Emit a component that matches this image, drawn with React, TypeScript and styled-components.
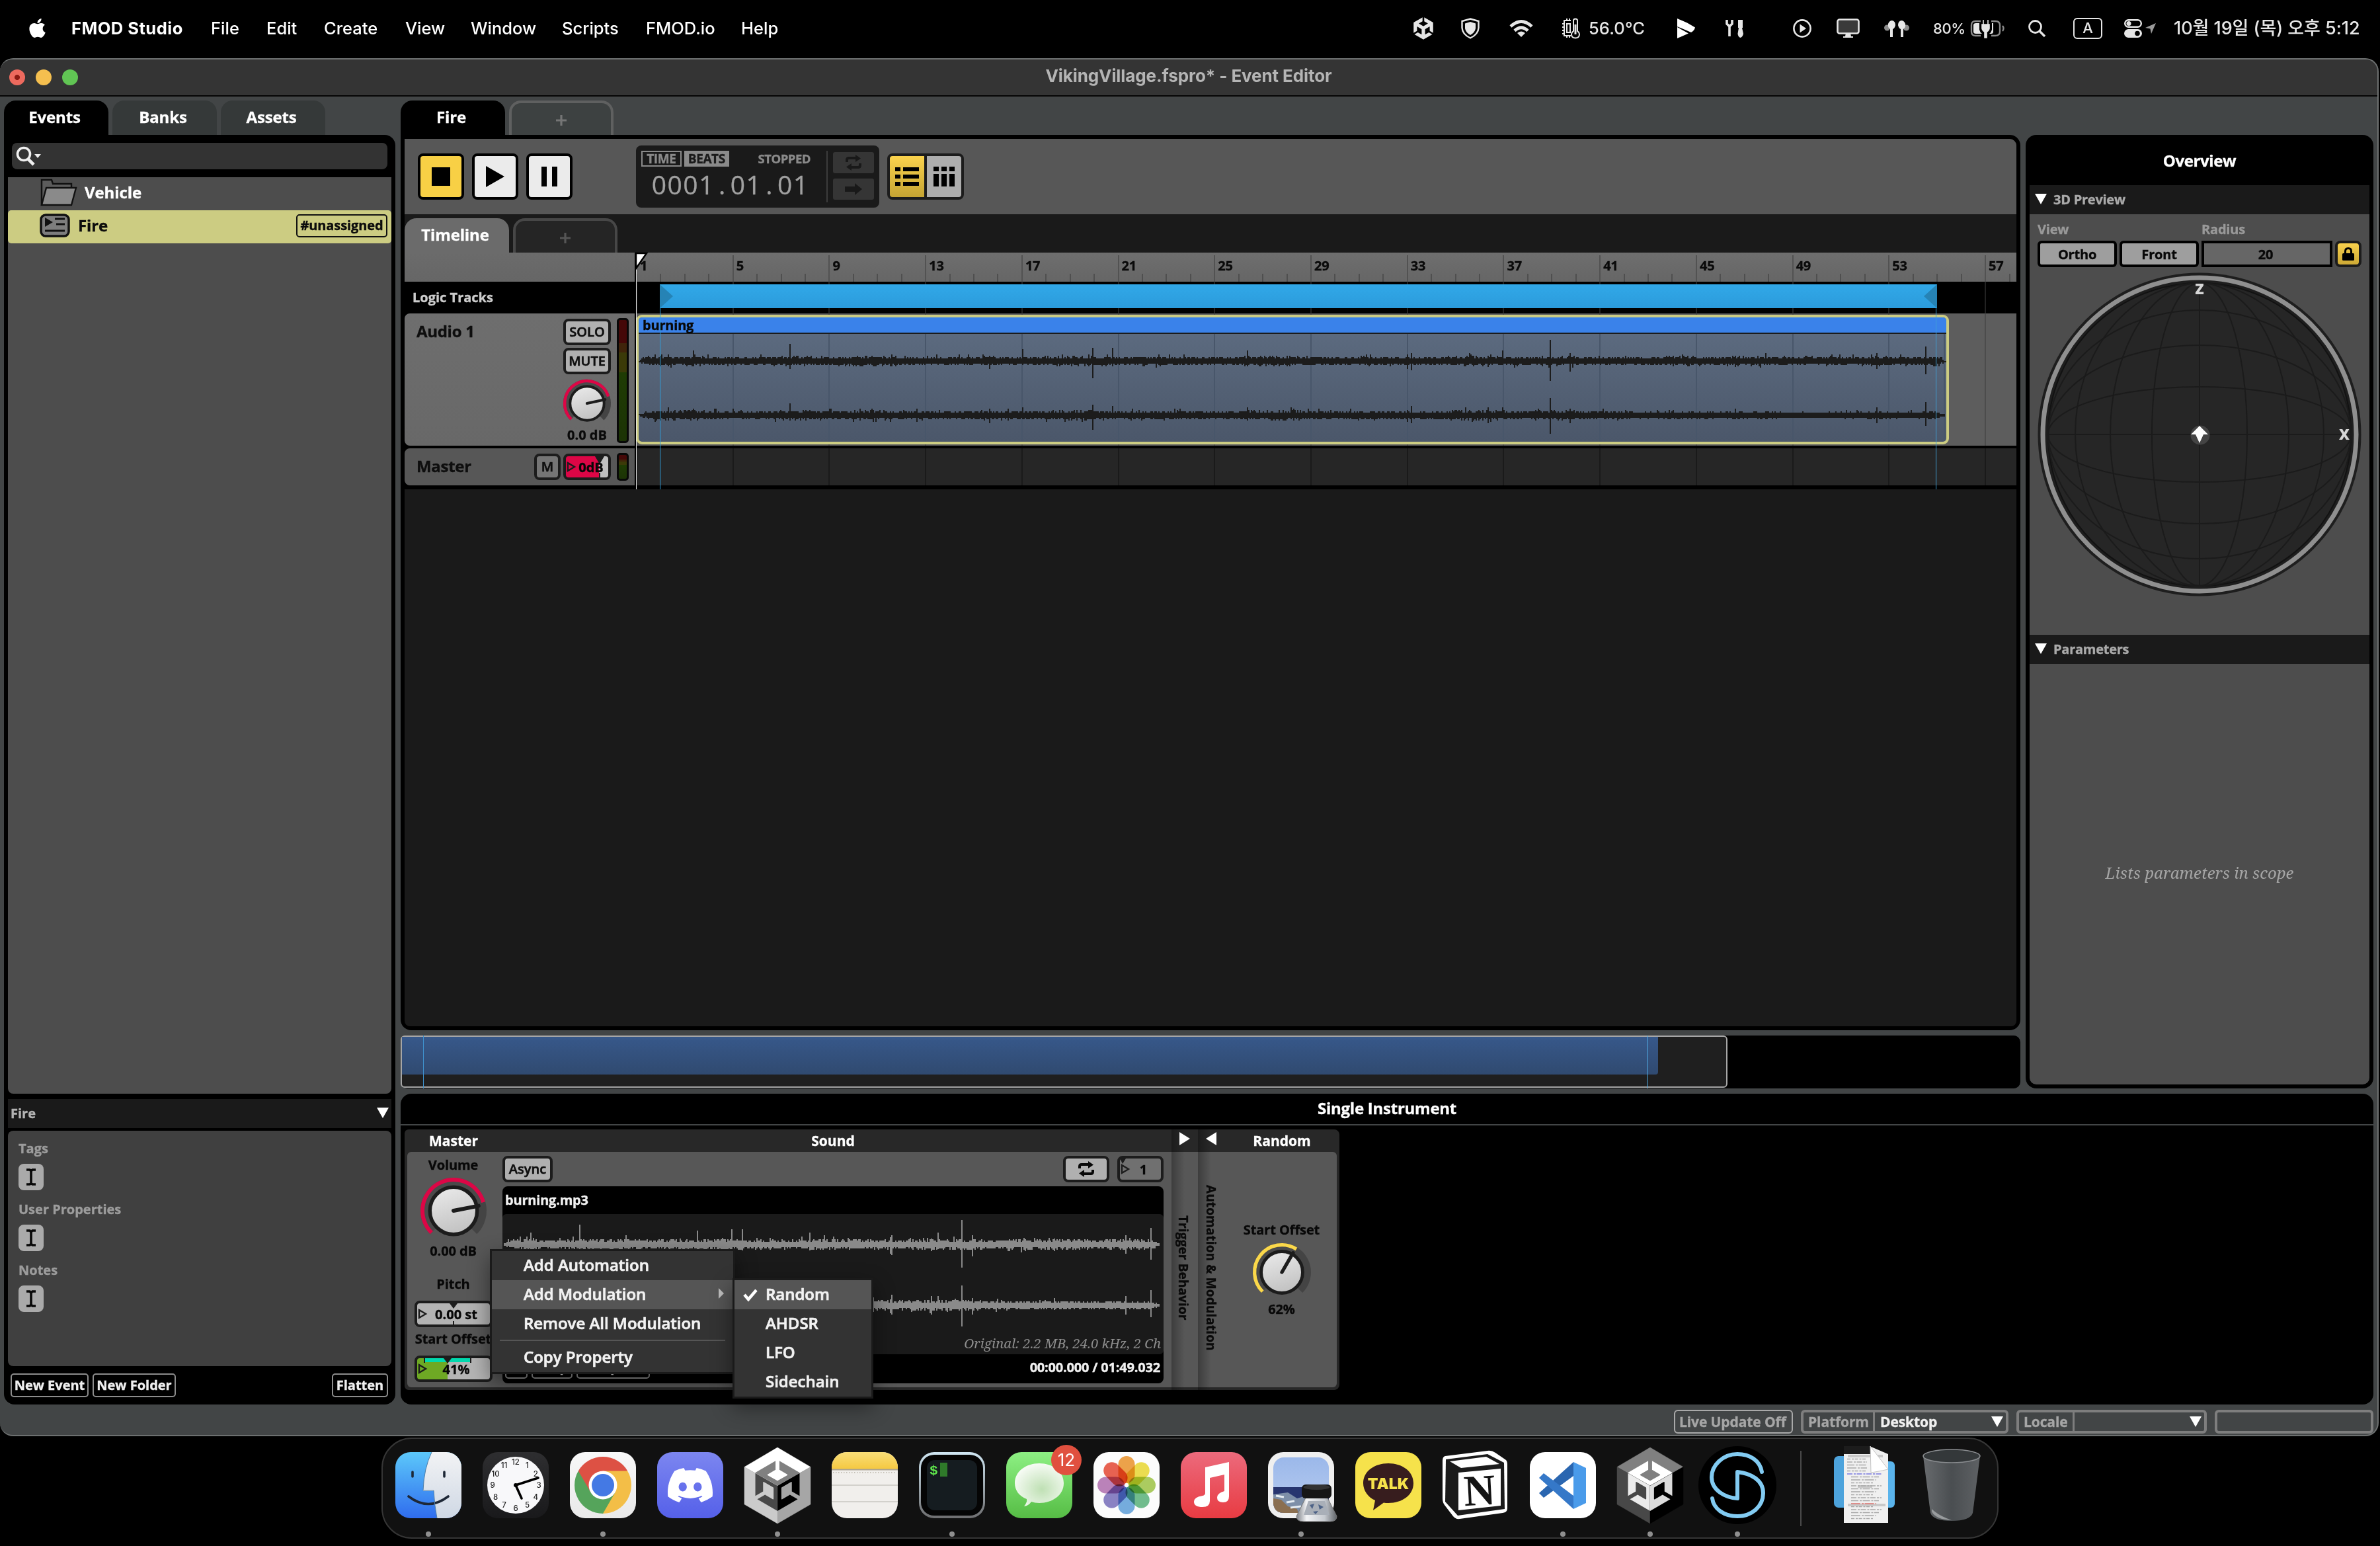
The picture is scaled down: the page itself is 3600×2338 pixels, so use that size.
import React from 'react';
import styled, { createGlobalStyle, css } from 'styled-components';
import { FaApple, FaDiscord } from 'react-icons/fa';

const UI = `"Open Sans", "Noto Sans", sans-serif`;
const MAC = `Inter, "Noto Sans CJK KR", sans-serif`;
const SERIF = `"Noto Serif", "DejaVu Serif Condensed", "DejaVu Serif", serif`;
const BEAT = 36.43;
const BAR = BEAT * 4;

const Global = createGlobalStyle`
  * { box-sizing: border-box; }
  html, body { margin: 0; background: #000; }
  body { width: 3600px; height: 2338px; overflow: hidden; font-family: ${UI}; }
  svg { display: block; overflow: visible; flex: none; }
`;

const Screen = styled.div`
  width: 3600px;
  height: 2338px;
  display: flex;
  flex-direction: column;
  background: #000;
  overflow: hidden;
`;

/* ---------- menu bar ---------- */
const MenuBar = styled.header`
  height: 88px;
  flex: none;
  display: flex;
  align-items: center;
  padding: 0 0 3px 40px;
  color: #fff;
  font: 500 25.5px/34px ${MAC};
  white-space: nowrap;
`;
const MenuItem = styled.span<{ $w: number; $bold?: boolean; $ls?: number; $fs?: number }>`
  width: ${(p) => p.$w}px;
  flex: none;
  font-size: ${(p) => p.$fs ?? 25.5}px;
  font-weight: ${(p) => (p.$bold ? 700 : 500)};
  letter-spacing: ${(p) => p.$ls ?? 0}px;
`;
const TrayItem = styled(MenuItem)`
  color: #e6e6e6;
  display: flex;
  align-items: center;
`;
const Grow = styled.div`
  flex: 1;
`;
const InputBadge = styled.span`
  width: 44px;
  height: 32px;
  border: 2.5px solid #e6e6e6;
  border-radius: 6px;
  font-size: 22px;
  line-height: 27px;
  text-align: center;
`;

/* ---------- window ---------- */
const Window = styled.main`
  width: 3598px;
  height: 2084px;
  flex: none;
  display: flex;
  flex-direction: column;
  background: #424546;
  border: solid #6d7070;
  border-width: 2px 2px 2px 0;
  border-radius: 20px;
  overflow: hidden;
  -webkit-text-stroke: 0.35px currentColor;
`;
const TitleBar = styled.div`
  height: 56px;
  flex: none;
  background: #343434;
  border-bottom: 2px solid #050505;
  display: grid;
  grid-template-columns: 140px 1fr 140px;
  align-items: center;
`;
const Lights = styled.div`
  display: flex;
  gap: 16px;
  padding-left: 14px;
`;
const Light = styled.i<{ $c: string; $dot?: boolean }>`
  width: 24px;
  height: 24px;
  border-radius: 50%;
  background: ${(p) => (p.$dot ? `radial-gradient(circle, #8b1a13 0 3.6px, ${p.$c} 4.4px)` : p.$c)};
`;
const WindowTitle = styled.h1`
  margin: 0;
  text-align: center;
  color: #b4b4b4;
  font: 700 26px/34px ${MAC};
  letter-spacing: -0.1px;
  padding-bottom: 4px;
  -webkit-text-stroke: 0;
`;
const Main = styled.div`
  flex: 1;
  min-height: 0;
  display: flex;
  gap: 8px;
  padding: 6px 6px 0;
`;
const Column = styled.div<{ $w?: number; $gap?: number }>`
  display: flex;
  flex-direction: column;
  gap: ${(p) => p.$gap ?? 0}px;
  ${(p) => (p.$w ? `width: ${p.$w}px; flex: none;` : 'flex: 1; min-width: 0;')}
`;
const Row = styled.div<{ $gap?: number }>`
  display: flex;
  gap: ${(p) => p.$gap ?? 0}px;
`;

const TabStrip = styled.div`
  height: 52px;
  flex: none;
  display: flex;
  gap: 6px;
`;
const Tab = styled.div<{ $kind: 'active' | 'idle' | 'timeline' | 'add' | 'addDark' }>`
  width: 158px;
  height: 52px;
  display: flex;
  align-items: center;
  justify-content: center;
  padding: 0 5px 3px 0;
  border-radius: 18px 18px 0 0;
  color: #fff;
  font-size: 24px;
  font-weight: 700;
  letter-spacing: -0.15px;
  ${(p) => p.$kind === 'active' && css`background: #000;`}
  ${(p) => p.$kind === 'idle' && css`background: #353939;`}
  ${(p) => p.$kind === 'timeline' && css`background: #6b6b6b;`}
  ${(p) => p.$kind === 'add' && css`background: #3d4141; border: 4px solid #5f6060; border-bottom: 0; padding: 4px 0 0;`}
  ${(p) => p.$kind === 'addDark' && css`background: #252525; border: 4px solid #474747; border-bottom: 0; padding: 4px 0 0;`}
`;
const Plus = ({ c = '#757575' }) => (
  <svg width="16" height="16" viewBox="0 0 16 16">
    <path d="M8 0V16M0 8H16" stroke={c} strokeWidth="3.2" />
  </svg>
);

/* ---------- left browser ---------- */
const BrowserPanel = styled.div`
  flex: 1;
  display: flex;
  flex-direction: column;
  background: #000;
  border-radius: 0 16px 16px 16px;
  padding: 12px 6px 11px;
`;
const SearchBox = styled.div`
  height: 40px;
  margin: 0 6px 12px;
  border-radius: 8px;
  background: #333;
  padding: 5px 6px;
`;
const Tree = styled.div`
  height: 1386px;
  flex: none;
  background: #4d4d4d;
  border-radius: 0 0 8px 8px;
`;
const TreeRow = styled.div<{ $selected?: boolean }>`
  height: 50px;
  display: flex;
  align-items: center;
  gap: 12px;
  padding: 0 6px 5px ${(p) => (p.$selected ? 48 : 50)}px;
  border-radius: 5px;
  font-size: 24px;
  font-weight: 700;
  letter-spacing: -0.1px;
  color: ${(p) => (p.$selected ? '#0c0c0c' : '#fff')};
  background: ${(p) => (p.$selected ? '#cccc82' : 'transparent')};
`;
const Tag = styled.span`
  height: 35px;
  width: 138px;
  margin: 2px 0 0 auto;
  border: 2px solid #111;
  border-radius: 5px;
  font-size: 20px;
  line-height: 30px;
  text-align: center;
`;
const DetailHeader = styled.div`
  height: 44px;
  margin: 8px 0 4px;
  flex: none;
  display: flex;
  align-items: center;
  justify-content: space-between;
  padding: 0 4px 2px 4px;
  background: #1a1a1a;
  color: #b3b3b3;
  font-size: 20px;
  font-weight: 700;
`;
const DetailBody = styled.div`
  height: 356px;
  flex: none;
  border-radius: 8px;
  background: #404040;
  padding: 14px 16px;
`;
const Field = styled.div`
  height: 92px;
  color: #9c9c9c;
  font-size: 20px;
  line-height: 26px;
  font-weight: 700;
`;
const CursorButton = styled.div`
  width: 38px;
  height: 40px;
  margin-top: 10px;
  border-radius: 8px;
  background: #aaa;
  display: flex;
  align-items: center;
  justify-content: center;
`;
const BrowserFooter = styled.div`
  display: flex;
  gap: 6px;
  padding: 11px 5px 0 4px;
`;
const OutlineButton = styled.div<{ $w: number; $end?: boolean }>`
  width: ${(p) => p.$w}px;
  height: 36px;
  margin-left: ${(p) => (p.$end ? 'auto' : 0)};
  border: 2px solid #8c8c8c;
  border-radius: 5px;
  color: #f0f0f0;
  font-size: 20px;
  font-weight: 700;
  line-height: 32px;
  text-align: center;
  white-space: nowrap;
`;

/* ---------- editor ---------- */
const Editor = styled.section`
  height: 1354px;
  flex: none;
  display: flex;
  flex-direction: column;
  background: #000;
  border-radius: 0 16px 16px 16px;
  padding: 6px;
`;
const Toolbar = styled.div`
  height: 114px;
  flex: none;
  display: flex;
  align-items: flex-start;
  padding: 10px 20px;
  background: #575757;
  border-radius: 0 10px 0 0;
`;
const Transport = styled.div`
  display: flex;
  gap: 12px;
  width: 330px;
  padding-top: 12px;
`;
const TransportButton = styled.div<{ $on?: boolean }>`
  width: 70px;
  height: 70px;
  border: 4px solid #000;
  border-radius: 8px;
  background: ${(p) => (p.$on ? '#f8d045' : '#ebebeb')};
  display: flex;
  align-items: center;
  justify-content: center;
`;
const Clock = styled.div`
  width: 368px;
  height: 94px;
  border-radius: 8px;
  background: #1a1a1a;
  display: flex;
  padding: 8px;
  color: #8a8a8a;
`;
const ClockFace = styled.div`
  width: 282px;
  height: 78px;
  border-right: 2px solid #3c3c3c;
`;
const ClockModes = styled.div`
  display: flex;
  gap: 4px;
  height: 24px;
  font-weight: 700;
  font-size: 19px;
  line-height: 24px;
`;
const Mode = styled.span<{ $on?: boolean; $w: number }>`
  width: ${(p) => p.$w}px;
  height: 24px;
  text-align: center;
  letter-spacing: -0.4px;
  ${(p) =>
    p.$on
      ? css`background: #8a8a8a; color: #1a1a1a; line-height: 24px;`
      : css`border: 2px solid #8a8a8a; line-height: 20px;`}
`;
const ClockState = styled.span`
  width: 150px;
  padding-right: 24px;
  text-align: right;
  font-size: 18.5px;
  letter-spacing: -0.5px;
`;
const Digits = styled.div`
  display: flex;
  padding: 2px 0 0 15px;
  font-size: 39px;
  line-height: 50px;
  font-weight: 400;
  color: #a0a0a0;
  span {
    width: 23.8px;
    text-align: center;
  }
`;
const ClockSide = styled.div`
  display: flex;
  flex-direction: column;
  gap: 8px;
  padding: 2px 0 0 8px;
`;
const SideButton = styled.div`
  width: 62px;
  height: 32px;
  border-radius: 3px;
  background: #353535;
  display: flex;
  align-items: center;
  justify-content: center;
`;
const ViewSwitch = styled.div`
  display: flex;
  margin: 12px 0 0 12px;
  width: 116px;
  height: 70px;
  border: 4px solid #1c1c1c;
  border-radius: 8px;
  background: #1c1c1c;
  gap: 4px;
`;
const ViewOption = styled.div<{ $on?: boolean }>`
  flex: 1;
  border-radius: ${(p) => (p.$on ? '4px 0 0 4px' : '0 4px 4px 0')};
  background: ${(p) => (p.$on ? 'linear-gradient(#fbd34d, #c5a433)' : '#adadad')};
  display: flex;
  align-items: center;
  justify-content: center;
`;
const ViewTabs = styled.div`
  height: 58px;
  flex: none;
  display: flex;
  gap: 6px;
  padding-top: 6px;
  background: #1a1a1a;
`;
const Timeline = styled.div`
  position: relative;
  height: 358px;
  flex: none;
`;
const TrackRow = styled.div<{ $h: number; $mb?: number }>`
  display: flex;
  height: ${(p) => p.$h}px;
  margin-bottom: ${(p) => p.$mb ?? 0}px;
`;
const grid = (c: string, off = 0) =>
  `repeating-linear-gradient(to right, ${c} 0 2px, transparent 2px ${BAR}px) ${off}px 0 / 100% 100%`;
const RulerHead = styled.div`
  width: 348px;
  background: linear-gradient(#6b6b6b, #666);
  margin-right: 2px;
`;
const Ruler = styled.div`
  flex: 1;
  display: flex;
  overflow: hidden;
  background: repeating-linear-gradient(to right, #4f4f4f 0 2px, transparent 2px ${BEAT}px) 0 32px / 100% 12px no-repeat,
    linear-gradient(#6e6e6e, #666);
`;
const RulerMark = styled.span<{ $first: boolean }>`
  width: ${BAR}px;
  height: 40px;
  margin-top: 4px;
  flex: none;
  padding-left: 4px;
  border-left: 2px solid ${(p) => (p.$first ? 'transparent' : '#525252')};
  color: #0a0a0a;
  font-size: 20px;
  line-height: 32px;
  font-weight: 700;
  letter-spacing: -0.2px;
`;
const LogicHead = styled.div`
  width: 350px;
  padding-left: 12px;
  color: #ccc;
  font-size: 20px;
  line-height: 47px;
  font-weight: 700;
`;
const LogicLane = styled.div`
  flex: 1;
  padding: 4px 0 0 36px;
  background: ${grid('#222')};
`;
const LoopRegion = styled.div`
  width: 1932px;
  height: 36px;
  display: flex;
  justify-content: space-between;
  background: linear-gradient(#31a8e8, #2b9bdb);
`;
const TrackHead = styled.div<{ $c: string }>`
  width: 348px;
  margin-right: 2px;
  display: flex;
  justify-content: space-between;
  border-radius: 8px 0 0 8px;
  background: ${(p) => p.$c};
  padding: 8px 9px 3px 18px;
`;
const TrackName = styled.span`
  font-size: 24px;
  line-height: 37px;
  font-weight: 700;
  letter-spacing: -0.3px;
  color: #0e0e0e;
  flex: 1;
`;
const TrackControls = styled.div`
  width: 72px;
  margin-right: 9px;
  display: flex;
  flex-direction: column;
  gap: 4px;
  align-items: center;
`;
const TrackKnob = styled.div`
  margin: 4px 0 -4px;
`;
const GreyButton = styled.div<{ $w: number; $c?: string; $h?: number }>`
  width: ${(p) => p.$w}px;
  height: ${(p) => p.$h ?? 40}px;
  flex: none;
  border: 4px solid #1c1c1c;
  border-radius: 8px;
  background: ${(p) => p.$c ?? '#b0b0b0'};
  color: #0e0e0e;
  display: flex;
  align-items: center;
  justify-content: center;
  font-size: 20px;
  line-height: 30px;
  font-weight: 600;
  -webkit-text-stroke-width: 0.6px;
`;
const Meter = styled.div<{ $h: number }>`
  width: 18px;
  height: ${(p) => p.$h}px;
  border: 3px solid #080808;
  border-radius: 5px;
  background: linear-gradient(#450808 0 19%, #40240a 19% 27%, #3b3a08 27% 43%, #1f3c04 43%, #1c3305);
`;
const MeterSlot = styled.div<{ $ml?: number }>`
  margin: -1px 0 0 ${(p) => p.$ml ?? 0}px;
`;
const DbText = styled.div`
  font-size: 20px;
  line-height: 24px;
  font-weight: 700;
  color: #0a0a0a;
  white-space: nowrap;
`;
const Lane = styled.div<{ $c: string; $g: string }>`
  flex: 1;
  padding: 2px 0;
  background: ${(p) => grid(p.$g)}, ${(p) => p.$c};
`;
const Clip = styled.div`
  width: 1986px;
  height: 196px;
  border: 4px solid #cccc82;
  border-radius: 9px;
  overflow: hidden;
  background: ${grid('#48566a', -4)}, linear-gradient(#5e6d82, #4b576a);
`;
const ClipTitle = styled.div`
  height: 25px;
  background: #3a82ea;
  border-bottom: 2px solid #1c1c1c;
  padding-left: 6px;
  color: #080808;
  font-size: 20px;
  line-height: 23px;
  font-weight: 700;
  letter-spacing: -0.2px;
`;
const MiniSlider = styled.div<{ $w: number; $fill: string }>`
  position: relative;
  width: ${(p) => p.$w}px;
  height: 40px;
  flex: none;
  border: 4px solid #1c1c1c;
  border-radius: 8px;
  background: ${(p) => p.$fill};
  display: flex;
  align-items: center;
  justify-content: center;
  font-size: 20px;
  font-weight: 700;
  color: #080808;
  white-space: nowrap;
  svg {
    position: absolute;
    left: 0;
    top: 0;
  }
`;
const SliderText = styled.span<{ $pl: number }>`
  position: relative;
  padding-left: ${(p) => p.$pl}px;
`;
const PlayLine = styled.i<{ $x: number; $top: number; $c: string }>`
  position: absolute;
  left: ${(p) => p.$x}px;
  top: ${(p) => p.$top}px;
  bottom: 0;
  width: 1px;
  background: ${(p) => p.$c};
`;
const Playhead = styled.div`
  position: absolute;
  left: 349px;
  top: 0;
`;
const EditorVoid = styled.div`
  flex: 1;
  background: #1a1a1a;
  border-radius: 0 0 8px 8px;
`;

const Navigator = styled.div`
  position: relative;
  height: 80px;
  margin-top: 8px;
  flex: none;
  background: #000;
  border-radius: 10px;
`;
const NavWindow = styled.div`
  width: 2007px;
  height: 79px;
  background: #1f1f1f;
  border: 2px solid #a6a6a6;
  border-radius: 6px;
`;
const NavClip = styled.div`
  width: 1900px;
  height: 57px;
  background: linear-gradient(#37588a, #304a70);
  border-radius: 0 0 4px 0;
`;

/* ---------- overview ---------- */
const Overview = styled.aside`
  width: 526px;
  height: 1442px;
  margin-top: 52px;
  flex: none;
  background: #000;
  border-radius: 16px;
  padding: 0 6px 6px;
  display: flex;
  flex-direction: column;
`;
const OverviewTitle = styled.div`
  height: 76px;
  color: #fff;
  font-size: 24px;
  line-height: 78px;
  font-weight: 700;
  letter-spacing: -0.4px;
  text-align: center;
`;
const SectionHeader = styled.div`
  height: 44px;
  flex: none;
  display: flex;
  align-items: center;
  gap: 10px;
  padding: 0 0 2px 8px;
  background: #1a1a1a;
  color: #aaa;
  font-size: 20px;
  font-weight: 700;
  letter-spacing: -0.25px;
`;
const Preview = styled.div`
  height: 636px;
  flex: none;
  background: #4d4d4d;
  padding: 8px 12px;
`;
const PreviewControls = styled.div`
  display: grid;
  grid-template-columns: 120px 120px 198px 40px;
  column-gap: 4px;
  grid-template-rows: 32px 40px;
  color: #999;
  font-size: 20px;
  line-height: 29px;
  font-weight: 700;
  letter-spacing: -0.2px;
`;
const RadiusLabel = styled.span`
  grid-column: 3 / 5;
`;
const ViewLabel = styled.span`
  grid-column: 1 / 3;
`;
const PreviewButton = styled.div<{ $kind?: 'input' | 'lock' }>`
  display: flex;
  align-items: center;
  justify-content: center;
  border: 4px solid ${(p) => (p.$kind === 'lock' ? '#1c1c1c' : '#000')};
  border-radius: ${(p) => (p.$kind === 'input' ? 0 : p.$kind === 'lock' ? 8 : 6)}px;
  background: ${(p) =>
    p.$kind === 'input' ? '#666' : p.$kind === 'lock' ? 'linear-gradient(#f8d04c, #cda935)' : '#9e9e9e'};
  padding-right: ${(p) => (p.$kind === 'input' ? 4 : 0)}px;
  color: #080808;
`;
const SphereWrap = styled.div`
  display: flex;
  justify-content: center;
  padding-top: 8px;
`;
const Params = styled.div`
  flex: 1;
  display: flex;
  align-items: center;
  justify-content: center;
  background: #4d4d4d;
  border-radius: 0 0 10px 10px;
  color: #a5a5a5;
  font: italic 400 24px/30px ${SERIF};
  padding-bottom: 4px;
  -webkit-text-stroke: 0;
`;

/* ---------- instrument deck ---------- */
const Instrument = styled.section`
  height: 470px;
  margin-top: 8px;
  background: #000;
  border-radius: 16px;
  width: 2984px;
`;
const InstrumentTitle = styled.div`
  height: 48px;
  border-bottom: 2px solid #424546;
  color: #fff;
  font-size: 24px;
  line-height: 44px;
  font-weight: 700;
  letter-spacing: -0.25px;
  text-align: center;
`;
const Deck = styled.div`
  position: relative;
  display: flex;
  width: 1414px;
  height: 394px;
  margin: 6px 0 0 6px;
  border-radius: 6px 8px 8px 6px;
  background: #282828;
`;
const DeckMain = styled.div`
  width: 1160px;
`;
const DeckHead = styled.div`
  height: 34px;
  display: flex;
  color: #fff;
  font-size: 21px;
  line-height: 34px;
  font-weight: 700;
  text-align: center;
`;
const HeadCell = styled.span<{ $w: number }>`
  width: ${(p) => p.$w}px;
`;
const DeckBody = styled.div`
  height: 356px;
  margin-left: 4px;
  border-radius: 6px 0 0 6px;
  background: #575757;
  display: flex;
`;
const MasterCol = styled.div`
  width: 144px;
  padding: 7px 5px 0 0;
  display: flex;
  flex-direction: column;
  align-items: center;
`;
const Caption = styled.div<{ $mt?: number }>`
  margin-top: ${(p) => p.$mt ?? 0}px;
  height: 26px;
  font-size: 20px;
  line-height: 26px;
  font-weight: 700;
  letter-spacing: -0.1px;
  color: #080808;
  white-space: nowrap;
`;
const SliderSlot = styled.div<{ $mt: number }>`
  margin-top: ${(p) => p.$mt}px;
`;
const SoundCol = styled.div`
  width: 1000px;
  padding-top: 6px;
`;
const SoundTools = styled.div`
  display: flex;
  gap: 12px;
  margin-bottom: 6px;
`;
const SoundPanel = styled.div`
  height: 298px;
  background: #000;
  border-radius: 8px;
  display: flex;
  flex-direction: column;
`;
const FileName = styled.div`
  height: 42px;
  padding-left: 4px;
  color: #f0f0f0;
  font-size: 20px;
  line-height: 41px;
  font-weight: 700;
  letter-spacing: -0.2px;
`;
const WaveBox = styled.div`
  height: 212px;
  flex: none;
  border-radius: 6px;
  background: #1a1a1a;
  padding: 6px 2px 0;
`;
const Original = styled.div`
  padding-right: 2px;
  text-align: right;
  color: #8e8e8e;
  font: italic 400 20.2px/30px ${SERIF};
  -webkit-text-stroke: 0;
`;
const SoundFooter = styled.div`
  display: flex;
  align-items: center;
  justify-content: space-between;
  padding: 1px 5px 0 4px;
  color: #f0f0f0;
  font-size: 20px;
  font-weight: 700;
  letter-spacing: -0.2px;
`;
const Strip = styled.div<{ $w: number }>`
  width: ${(p) => p.$w}px;
  height: 394px;
  background: linear-gradient(to right, rgba(0, 0, 0, 0.3), transparent 20px),
    linear-gradient(#282828 0 34px, #575757 34px 390px, #282828 390px);
  display: flex;
  flex-direction: column;
  align-items: center;
  padding-top: 5px;
`;
const VerticalText = styled.div<{ $mt: number; $shift?: number }>`
  margin-top: ${(p) => p.$mt}px;
  padding-right: ${(p) => p.$shift ?? 0}px;
  writing-mode: vertical-rl;
  color: #0a0a0a;
  font-size: 19px;
  line-height: 24px;
  font-weight: 700;
  letter-spacing: 0.12px;
  white-space: nowrap;
`;
const RandomHead = styled(HeadCell)`
  height: 34px;
  color: #fff;
  font-size: 21px;
  line-height: 34px;
  font-weight: 700;
  text-align: center;
`;
const RandomCol = styled.div`
  width: 174px;
  display: flex;
  flex-direction: column;
`;
const RandomBody = styled.div`
  height: 356px;
  margin-right: 4px;
  border-radius: 0 6px 6px 0;
  background: #575757;
  display: flex;
  flex-direction: column;
  align-items: center;
  padding: 105px 0 0 3px;
`;
const ContextMenu = styled.div<{ $x: number; $y: number; $w: number }>`
  position: absolute;
  z-index: 2;
  left: ${(p) => p.$x}px;
  top: ${(p) => p.$y}px;
  width: ${(p) => p.$w}px;
  border: 3px solid #1a1a1a;
  background: #333;
  box-shadow: 0 12px 30px rgba(0, 0, 0, 0.45);
`;
const ContextItem = styled.div<{ $on?: boolean; $left: number }>`
  height: 44px;
  display: flex;
  align-items: center;
  position: relative;
  padding: 0 14px 4px ${(p) => p.$left}px;
  background: ${(p) => (p.$on ? '#555' : 'transparent')};
  color: #f2f2f2;
  font-size: 24px;
  font-weight: 600;
  letter-spacing: -0.02px;
  -webkit-text-stroke-width: 0.7px;
  white-space: nowrap;
  svg:last-child:not(:first-child) {
    margin-left: auto;
  }
`;
const CheckSlot = styled.span`
  width: 34px;
  padding-top: 4px;
`;
const MenuRule = styled.hr`
  height: 2px;
  margin: 2px 12px 3px;
  border: 0;
  background: #555;
`;

/* ---------- status bar ---------- */
const StatusBar = styled.footer`
  height: 46px;
  flex: none;
  display: flex;
  justify-content: flex-end;
  gap: 12px;
  padding: 8px 6px 0 0;
`;
const StatusBox = styled.div<{ $w: number; $light?: boolean }>`
  width: ${(p) => p.$w}px;
  height: 36px;
  border: ${(p) => (p.$light ? '2px solid #a9a9a9' : '4px solid #7e7e7e')};
  border-radius: 6px;
  display: flex;
  align-items: center;
  color: #a6a6a6;
  font-size: 21px;
  font-weight: 700;
  letter-spacing: -0.1px;
  white-space: nowrap;
  padding: 0 ${(p) => (p.$light ? 6 : 4)}px;
`;
const StatusKey = styled.span<{ $w: number }>`
  width: ${(p) => p.$w}px;
  height: 28px;
  line-height: 28px;
  border-right: 3px solid #7e7e7e;
  padding-left: 3px;
  margin-right: 8px;
`;
const StatusValue = styled.span`
  color: #f0f0f0;
  flex: 1;
`;

/* ---------- dock ---------- */
const Dock = styled.nav`
  width: 2446px;
  height: 153px;
  margin: 2px 0 0 577px;
  flex: none;
  border: 2px solid #363636;
  border-radius: 46px;
  background: #111;
  display: flex;
  padding: 20px 0 0 3px;
`;
const DockCell = styled.div`
  position: relative;
  width: 132px;
  display: flex;
  flex-direction: column;
  align-items: center;
  gap: 20px;
`;
const DockSplit = styled.div`
  width: 60px;
  display: flex;
  justify-content: center;
  i {
    width: 2px;
    height: 114px;
    margin-top: -2px;
    background: #4a4a4a;
  }
`;
const RunDot = styled.i`
  width: 8px;
  height: 8px;
  border-radius: 50%;
  background: #8f8f8f;
`;
const Badge = styled.span`
  position: absolute;
  left: 84px;
  top: -11px;
  width: 46px;
  height: 46px;
  border-radius: 50%;
  background: #e0503f;
  color: #fff;
  text-align: center;
  font: 400 26px/46px ${MAC};
`;
const AppTile = styled.div<{ $bg: string }>`
  width: 100px;
  height: 100px;
  border-radius: 23px;
  background: ${(p) => p.$bg};
  display: flex;
  align-items: center;
  justify-content: center;
  overflow: hidden;
`;
const TalkText = styled.span`
  color: #f6e24b;
  font: 900 23px/24px ${MAC};
  position: absolute;
  top: 36px;
`;
const NotionLetter = styled.text`
  font: 700 66px "Liberation Serif", serif;
`;

/* ---------- drawings ---------- */
type Spike = [number, number, number, number, number];
const spikes: Spike[] = [
  [0.041, 16, 8, 10, 6],
  [0.115, 26, 12, 18, 8],
  [0.268, 8, 12, 10, 12],
  [0.293, 18, 6, 12, 6],
  [0.347, 20, 26, 16, 22],
  [0.362, 20, 8, 14, 6],
  [0.465, 16, 8, 12, 8],
  [0.587, 10, 12, 8, 10],
  [0.5905, 12, 14, 14, 12],
  [0.649, 8, 9, 12, 12],
  [0.66, 16, 6, 12, 4],
  [0.697, 32, 30, 26, 28],
  [0.712, 12, 16, 10, 12],
  [0.838, 8, 9, 10, 6],
  [0.946, 12, 12, 12, 12],
  [0.9838, 22, 20, 20, 16],
];
function wavePath(width: number, center: number, channel: 0 | 1, scale: number) {
  const n = Math.floor(width / 2);
  let seed = 77 + channel * 13;
  const rnd = () => {
    seed = (seed * 16807) % 2147483647;
    return seed / 2147483647;
  };
  const tops: number[] = [];
  const downs: number[] = [];
  for (let i = 0; i < n; i++) {
    const f = i / n;
    const swell = 0.8 + 0.25 * Math.sin(f * 61) * Math.sin(f * 23);
    const calm = channel && f > 0.76 ? 0.55 : 1;
    const burst = rnd() > 0.95 ? 4 : 0;
    const edge = Math.min(1, (i + 2) / 8, (n - i) / 8);
    tops.push(2 * Math.round((3.4 + (rnd() * 4.6 * swell + burst) * calm) * edge * scale * 0.5));
    downs.push(2 * Math.round((3.4 + (rnd() * 4.4 * swell + (rnd() > 0.96 ? 3 : 0)) * calm) * edge * scale * 0.5));
  }
  spikes.forEach(([f, u1, d1, u2, d2]) => {
    const i = Math.round(f * n);
    tops[i] = (channel ? u2 : u1) * scale;
    downs[i] = (channel ? d2 : d1) * scale;
  });
  let d = '';
  for (let i = 0; i < n; i++) d += `M${i * 2} ${center - tops[i]}h2v${tops[i] + downs[i]}h-2z`;
  return d;
}
const Wave = ({ w, h, c1, c2, color, scale }: { w: number; h: number; c1: number; c2: number; color: string; scale: number }) => (
  <svg width={w} height={h} viewBox={`0 0 ${w} ${h}`} shapeRendering="crispEdges">
    <path d={wavePath(w, c1, 0, scale) + wavePath(w, c2, 1, scale)} fill={color} />
  </svg>
);

const polar = (r: number, deg: number) => {
  const a = (deg * Math.PI) / 180;
  return `${(r * Math.sin(a)).toFixed(2)} ${(-r * Math.cos(a)).toFixed(2)}`;
};
const arc = (r: number, a: number, b: number) => `M${polar(r, a)}A${r} ${r} 0 ${b - a > 180 ? 1 : 0} 1 ${polar(r, b)}`;
const Knob = ({ r, end, point, color, id }: { r: number; end: number; point: number; color: string; id: string }) => {
  const dial = r * 0.77;
  return (
    <svg width={r * 2} height={r * 2} viewBox={`${-r} ${-r} ${2 * r} ${2 * r}`}>
      <defs>
        <linearGradient id={id} x1="0" y1="0" x2="0.3" y2="1">
          <stop offset="0" stopColor="#ececec" />
          <stop offset="1" stopColor="#c4c4c4" />
        </linearGradient>
      </defs>
      <path d={arc(r * 0.88, end, 135)} fill="none" stroke="#444" strokeWidth={r * 0.24} />
      <path d={arc(r * 0.88, -135, end)} fill="none" stroke="#4a4a4a" strokeWidth={r * 0.24} />
      <path d={arc(r * 0.94, -135, end)} fill="none" stroke={color} strokeWidth={r * 0.12} />
      <circle r={dial - r * 0.055} fill={`url(#${id})`} stroke="#1c1c1c" strokeWidth={r * 0.11} />
      <path d={`M0 0L${polar(dial, point)}`} stroke="#1c1c1c" strokeWidth={r * 0.12} strokeLinecap="round" />
    </svg>
  );
};

const Tri = ({ dir, s = 18, c = '#fff' }: { dir: 'down' | 'left' | 'right'; s?: number; c?: string }) => (
  <svg width={s} height={s} viewBox="0 0 18 18">
    <path d={dir === 'down' ? 'M0 1H18L9 17Z' : dir === 'left' ? 'M17 -1V19L1 9Z' : 'M1 -1V19L17 9Z'} fill={c} />
  </svg>
);
const RepeatIcon = ({ c }: { c: string }) => (
  <svg width="26" height="24" viewBox="0 0 26 24">
    <path d="M3 11V8Q3 5 6 5H17M23 13V16Q23 19 20 19H9" fill="none" stroke={c} strokeWidth="4" />
    <path d="M16 0L24 5.5L16 11ZM10 13L2 18.5L10 24Z" fill={c} />
  </svg>
);
const CursorIcon = () => (
  <svg width="16" height="26" viewBox="0 0 16 26">
    <path d="M1 2H6L8 4L10 2H15M1 24H6L8 22L10 24H15M8 3V23" fill="none" stroke="#080808" strokeWidth="3.6" />
  </svg>
);
const FolderIcon = () => (
  <svg width="54" height="44" viewBox="0 0 54 44">
    <path d="M1 42V3H16L18 9H46V15" fill="#5c5c5c" stroke="#111" strokeWidth="2.4" />
    <path d="M1 41L8 15H53L46 41Z" fill="#8a8a8a" stroke="#111" strokeWidth="2.4" />
  </svg>
);
const EventIcon = () => (
  <svg width="46" height="36" viewBox="0 0 46 36">
    <rect x="2" y="2" width="42" height="32" rx="7" fill="#7d7d7d" stroke="#111" strokeWidth="3.5" />
    <path d="M8 6L20 13L8 20Z" fill="#111" />
    <path d="M23 8H38M25 16H38M8 26H38" stroke="#111" strokeWidth="3" />
  </svg>
);

const Sphere = () => (
  <svg width="490" height="490" viewBox="-245 -245 490 490">
    <circle r="244.5" fill="#1e1e1e" />
    <circle r="237" fill="#1e1e1e" stroke="#8f8f8f" strokeWidth="7" />
    <circle r="229" fill="#262626" stroke="#121212" strokeWidth="2" />
    <g fill="none" stroke="#1b1b1b" strokeWidth="2">
      {[188, 135, 72].map((v) => (
        <React.Fragment key={v}>
          <ellipse rx="229" ry={v} />
          <ellipse rx={v} ry="229" />
        </React.Fragment>
      ))}
      <path d="M-229 0H229M0 -229V229" />
    </g>
    <circle cx="1" cy="1" r="14.5" fill="#444" />
    <path d="M0 -13L13 0H6L0 13L-6 0H-13Z" fill="#fff" />
    <g fill="#d6d6d6" fontFamily={UI} fontWeight="800" fontSize="22" textAnchor="middle">
      <text x="0" y="-212">Z</text>
      <text x="219" y="8">X</text>
    </g>
  </svg>
);

const UNITY =
  'm12.9288 4.2939 3.7997 2.1929c.1366.077.1415.2905 0 .3675l-4.515 2.6076a.4192.4192 0 0 1-.4246 0L7.274 6.8543c-.139-.0745-.1415-.293 0-.3675l3.7972-2.193V0L1.3758 5.5977V16.793l3.7177-2.1456v-4.3858c-.0025-.1565.1813-.2682.318-.1838l4.5148 2.6076a.4252.4252 0 0 1 .2136.3676v5.2127c.0025.1565-.1813.2682-.3179.1838l-3.7996-2.1929-3.7178 2.1457L12 24l9.6954-5.5977-3.7178-2.1457-3.7996 2.1929c-.1341.082-.3229-.0248-.3179-.1838v-5.2127c.0025-.1515.0869-.2956.2136-.3676l4.5148-2.6076c.134-.082.3228.0224.3179.1838v4.3858l3.7177 2.1456V5.5977L12.9288 0Z';
const FACES = ['M50 58L0 29.500L50 0L100 29.500Z', 'M0 29.500L50 58V115L0 86Z', 'M100 29.500L50 58V115L100 86Z'];
const UnityMark = ({ id, faces, marks }: { id: string; faces: string[]; marks: string[] }) => (
  <svg width="100" height="100" viewBox="0 7 100 100">
    {FACES.map((d, i) => (
      <React.Fragment key={i}>
        <clipPath id={`${id}${i}`}>
          <path d={d} />
        </clipPath>
        <path d={d} fill={faces[i]} stroke={faces[i]} strokeWidth="0.5" />
        <g clipPath={`url(#${id}${i})`}>
          <path d={UNITY} transform="translate(12.2 20.3) scale(3.15)" fill={marks[i]} />
        </g>
      </React.Fragment>
    ))}
  </svg>
);

const Finder = () => (
  <AppTile $bg="linear-gradient(#5cc8fa, #2f6cee)">
    <svg width="100" height="100" viewBox="0 0 100 100">
      <path d="M55 0H100V100H63Q59 80 58 59H42Q43 25 55 0Z" fill="url(#fg)" />
      <defs>
        <linearGradient id="fg" x1="0" y1="0" x2="0" y2="1">
          <stop offset="0" stopColor="#f2f3f5" />
          <stop offset="1" stopColor="#cfd8e4" />
        </linearGradient>
      </defs>
      <path d="M26 30V37M74 30V37M20 67Q50 90 80 67" fill="none" stroke="#1e2836" strokeWidth="3.6" strokeLinecap="round" />
      <path d="M55 0Q43 25 42 58H58Q59 80 63 100" fill="none" stroke="#4c7ea8" strokeWidth="1" />
    </svg>
  </AppTile>
);
const ClockApp = () => (
  <AppTile $bg="linear-gradient(#2e2e30, #19191b)">
    <svg width="100" height="100" viewBox="-50 -50 100 100">
      <circle r="43" fill="#f8f8fa" />
      <g fontFamily={MAC} fontSize="11.5" fontWeight="500" fill="#222" textAnchor="middle">
        {Array.from({ length: 12 }, (_, i) => {
          const a = ((i + 1) * Math.PI) / 6;
          return (
            <text key={i} x={35 * Math.sin(a)} y={-35 * Math.cos(a) + 4}>
              {i + 1}
            </text>
          );
        })}
      </g>
      <path d="M0 0L9 20M0 0L34 -11" stroke="#000" strokeWidth="3.6" strokeLinecap="round" />
      <circle r="3" fill="#000" />
    </svg>
  </AppTile>
);
const Chrome = () => (
  <AppTile $bg="linear-gradient(#f8f8f8, #e9e9e9)">
    <svg width="100" height="100" viewBox="-50 -50 100 100">
      <path d="M0 0L-37.2 -21.5A43 43 0 0 1 37.2 -21.5Z" fill="#dd5144" />
      <path d="M0 0L37.2 -21.5A43 43 0 0 1 0 43Z" fill="#f3be47" />
      <path d="M0 0L0 43A43 43 0 0 1 -37.2 -21.5Z" fill="#55a45b" />
      <path d="M0 -21.5H37.2L18 10Z" fill="#f3be47" />
      <path d="M-18.6 10.7L-37.2 -21.5L0 -21.5Z" fill="#dd5144" />
      <path d="M18.6 10.7L0 43L-18 11Z" fill="#55a45b" />
      <circle r="21.5" fill="#fff" />
      <circle r="17" fill="#4479e4" />
    </svg>
  </AppTile>
);
const Notes = () => (
  <AppTile $bg="#f1efec">
    <svg width="100" height="100" viewBox="0 0 100 100">
      <defs>
        <linearGradient id="nt" x1="0" y1="0" x2="0" y2="1">
          <stop offset="0" stopColor="#f9de78" />
          <stop offset="1" stopColor="#f5c840" />
        </linearGradient>
      </defs>
      <rect width="100" height="26" fill="url(#nt)" />
      <path d="M0 26.5H100" stroke="#aaa294" strokeWidth="2" />
      <path d="M2 31H98" stroke="#c6c2b8" strokeWidth="2" strokeDasharray="1.5 2.5" />
      <path d="M0 50H100M0 75H100" stroke="#d3d1cc" strokeWidth="2" />
    </svg>
  </AppTile>
);
const Terminal = () => (
  <AppTile $bg="linear-gradient(#cfe6f2, #6e6e70)">
    <svg width="100" height="100" viewBox="0 0 100 100">
      <rect x="3" y="4" width="94" height="92" rx="20" fill="#050505" />
      <rect x="12" y="12" width="76" height="76" rx="12" fill="#151c20" />
      <text x="16" y="34" fontFamily='"Liberation Mono", monospace' fontSize="21" fontWeight="700" fill="#5fe64c">$</text>
      <rect x="32" y="16" width="11" height="21" fill="#2f7a2a" />
    </svg>
  </AppTile>
);
const Messages = () => (
  <AppTile $bg="linear-gradient(#8df083, #56bd45)">
    <svg width="100" height="100" viewBox="0 0 100 100">
      <defs>
        <radialGradient id="ms" cx=".55" cy=".6" r=".6">
          <stop offset="0" stopColor="#bfe0b4" />
          <stop offset="1" stopColor="#f6fbf4" />
        </radialGradient>
      </defs>
      <path d="M50 17C70 17 87 29 87 47S70 77 50 77Q43 77 38 75Q34 81 27 82Q32 76 31 71C20 67 13 58 13 47C13 29 30 17 50 17Z" fill="url(#ms)" />
    </svg>
  </AppTile>
);
const petals = ['#ee9a37', '#eddc3e', '#a4c950', '#63b783', '#67a5dd', '#7f76c0', '#b576b4', '#e8523f'];
const Petal = styled.rect`
  mix-blend-mode: multiply;
`;
const Photos = () => (
  <AppTile $bg="#fcfcfc">
    <svg width="100" height="100" viewBox="-50 -50 100 100">
      {petals.map((c, i) => (
        <Petal key={c} x="-12.5" y="-44" width="25" height="41" rx="12.5" fill={c} opacity="0.9" transform={`rotate(${i * 45})`} />
      ))}
    </svg>
  </AppTile>
);
const Music = () => (
  <AppTile $bg="linear-gradient(#ec6a7c, #e83b42)">
    <svg width="100" height="100" viewBox="0 0 100 100">
      <path d="M37 23L73 15V67Q73 76 64 76Q55 76 55 69Q55 62 66 59V34L44 39V74Q44 83 33 83Q20 83 20 75Q20 68 33 66Q37 65 37 62Z" fill="#fff" />
    </svg>
  </AppTile>
);
const PreviewApp = () => (
  <svg width="100" height="100" viewBox="0 0 100 100">
    <defs>
      <linearGradient id="pv" x1="0" y1="0" x2="0" y2="1">
        <stop offset="0" stopColor="#9bb8ea" />
        <stop offset="1" stopColor="#b9cdf0" />
      </linearGradient>
      <linearGradient id="gl" x1="0" y1="0" x2="1" y2="0">
        <stop offset="0" stopColor="#7c8086" />
        <stop offset=".25" stopColor="#f2f3f5" />
        <stop offset=".7" stopColor="#c6cad0" />
        <stop offset="1" stopColor="#5f6368" />
      </linearGradient>
    </defs>
    <rect width="100" height="100" rx="23" fill="#efefef" />
    <rect x="8" y="8" width="84" height="84" rx="16" fill="url(#pv)" />
    <path d="M8 53H92V78Q90 92 76 92H24Q10 92 8 78Z" fill="#27356f" />
    <path d="M8 64L30 61L44 70L58 66V92H24Q10 92 8 78Z" fill="#7d8fa8" />
    <path d="M8 70L20 72L30 82L44 86L46 92H24Q10 92 8 78Z" fill="#8b6f50" />
    <path d="M12 66L24 68M28 76L40 74M34 84L50 82" stroke="#e6edf2" strokeWidth="3" />
    <path d="M57 69H90L104 97Q104 105 94 105H54Q43 105 43 97Z" fill="url(#gl)" stroke="#777" strokeWidth="1" />
    <path d="M61 74H86L93 95H54Z" fill="#a9afb8" />
    <path d="M63 80L70 78L67 86ZM76 79L84 83L78 87ZM68 90L76 89L72 94Z" fill="#4d6287" />
    <rect x="51" y="49" width="45" height="21" rx="6" fill="#161616" />
    <ellipse cx="73.500" cy="53" rx="20" ry="4" fill="#333" />
  </svg>
);
const Talk = () => (
  <AppTile $bg="#f6e24b">
    <svg width="100" height="100" viewBox="0 0 100 100">
      <path d="M50 17C71 17 88 29 88 47S71 77 50 77Q46 77 43 76.500L27 88L30 73C19 68 12 58 12 47C12 29 29 17 50 17Z" fill="#371d1e" />
    </svg>
    <TalkText>TALK</TalkText>
  </AppTile>
);
const Notion = () => (
  <svg width="100" height="100" viewBox="0 0 100 100">
    <path d="M4 6L68 -2Q74 -3 80 1L96 12Q98 14 98 19V85Q98 91 91 92L26 101Q20 102 16 97L3 80Q0 76 0 70V13Q0 7 4 6Z" fill="#fff" />
    <path d="M5 11L68 3L93 16L94 86L23 96L4 75Z" fill="#1b1b1b" />
    <path d="M11 14L66 7L86 18L28 24Z" fill="#fff" />
    <path d="M24 31L88 25V81L24 88Z" fill="#fff" />
    <NotionLetter x="32" y="80" fill="#141414" transform="rotate(-3 56 56)">N</NotionLetter>
  </svg>
);
const VsCode = () => (
  <AppTile $bg="#fff">
    <svg width="100" height="100" viewBox="0 0 100 100">
      <path d="M66 15L85 24V77L66 86Z" fill="#4a9bea" />
      <path d="M66 15L14 62L21 69L66 36Z" fill="#2a66b0" />
      <path d="M66 86L14 39L21 32L66 66Z" fill="#3578c8" />
    </svg>
  </AppTile>
);
const SApp = () => (
  <svg width="100" height="100" viewBox="-50 -50 100 100">
    <circle r="59" fill="#000" />
    <path d="M37 -20C34 -38 18 -47 0 -47C-22 -47 -39 -30 -39 -12C-39 8 -18 19 0 20V-20C20 -18 39 -8 39 12C39 32 22 47 0 47C-20 47 -36 36 -38 20" fill="none" stroke="#82cbf2" strokeWidth="6" strokeLinecap="round" strokeLinejoin="round" />
  </svg>
);
const Downloads = () => (
  <svg width="100" height="100" viewBox="0 0 100 100">
    <rect x="4" y="6" width="26" height="78" rx="7" fill="#4da3dc" />
    <rect x="70" y="14" width="26" height="70" rx="6" fill="#5ab4ec" />
    <path d="M19 -9H58L86 3V107H19Z" fill="#f0f0f0" />
    <path d="M19 -9H59V3H19Z" fill="#1c1c1c" />
    <path d="M25 6H78M40 52H62M25 80H82" stroke="#c9c9c9" strokeWidth="4" />
    {Array.from({ length: 21 }, (_, i) => (
      <path
        key={i}
        d={`M${i < 6 ? 24 : 30} ${10.5 + i * 4.5}H${i < 5 ? 54 : 64 + ((i * 7) % 4) * 4}`}
        stroke={i === 15 ? '#d9706c' : i === 5 ? '#7a7ae0' : '#a8a8a8'}
        strokeWidth="1.300"
        strokeDasharray={`${5 + (i % 4) * 3} 2 3 1.5`}
      />
    ))}
    <path d="M59 -9L86 26Q68 30 60 31Z" fill="#fff" stroke="#c4c4c4" strokeWidth="1" />
  </svg>
);
const Trash = () => (
  <svg width="100" height="100" viewBox="0 0 100 100">
    <defs>
      <linearGradient id="tr" x1="0" y1="0" x2="1" y2="0">
        <stop offset="0" stopColor="#686b6e" />
        <stop offset=".5" stopColor="#4a4e51" />
        <stop offset="1" stopColor="#5e6164" />
      </linearGradient>
    </defs>
    <path d="M7 6L18 92Q22 104 50 104T82 92L93 6Z" fill="url(#tr)" />
    <ellipse cx="50" cy="6" rx="43" ry="10" fill="#34383a" stroke="#8a8d90" strokeWidth="1.6" />
    <path d="M20 90Q26 102 50 103Q30 96 20 86Z" fill="#999c9e" />
  </svg>
);

const dockApps: { el: React.ReactNode; run?: boolean; badge?: string }[] = [
  { el: <Finder />, run: true },
  { el: <ClockApp /> },
  { el: <Chrome />, run: true },
  { el: <AppTile $bg="linear-gradient(#7c86f0, #5560e9)"><FaDiscord size={74} color="#fff" /></AppTile> },
  { el: <UnityMark id="ua" faces={['#fff', '#cbcbcb', '#a6a6a6']} marks={['#808080', '#484848', '#000']} />, run: true },
  { el: <Notes /> },
  { el: <Terminal />, run: true },
  { el: <Messages />, badge: '12' },
  { el: <Photos /> },
  { el: <Music /> },
  { el: <PreviewApp />, run: true },
  { el: <Talk /> },
  { el: <Notion /> },
  { el: <VsCode />, run: true },
  { el: <UnityMark id="ub" faces={['#808080', '#484848', '#000']} marks={['#fff', '#ececec', '#dcdcdc']} />, run: true },
  { el: <SApp />, run: true },
];

const G = '#e6e6e6';
const tray: { w: number; el: React.ReactNode; ls?: number; fs?: number }[] = [
  {
    w: 72,
    el: (
      <svg width="30" height="34" viewBox="1.2 0 21.6 24">
        <path d={UNITY} fill={G} />
      </svg>
    ),
  },
  {
    w: 73,
    el: (
      <svg width="28" height="32" viewBox="0 0 28 32">
        <path d="M14 1.500L26.500 5V15Q26 25 14 30.500Q2 25 1.500 15V5Z" fill="none" stroke={G} strokeWidth="2.4" />
        <path d="M14 6L22 8.500V16Q21 22 14 26Q7 22 6 16V8.500Z" fill={G} />
      </svg>
    ),
  },
  {
    w: 79,
    el: (
      <svg width="36" height="26" viewBox="0 0 36 26">
        <path d="M2 10Q18 -5 34 10M8 16.500Q18 7 28 16.500" fill="none" stroke={G} strokeWidth="4.6" />
        <path d="M12 20Q18 15 24 20L18 26Z" fill={G} />
      </svg>
    ),
  },
  {
    w: 41,
    el: (
      <svg width="28" height="32" viewBox="0 0 28 32">
        <path d="M14 4H4V27H14M8 9H13V22H8ZM1 9H4M1 14H4M1 19H4M1 24H4M8 1V4M12 1V4M8 27V30M12 27V30" fill="none" stroke={G} strokeWidth="2" />
        <path d="M18 20V4Q18 1.500 21 1.500T24 4V20Q27 22 27 25.500Q26.500 30.500 21 30.500T15 25.500Q15 22 18 20Z" fill="none" stroke={G} strokeWidth="2" />
        <path d="M21 10V25" stroke={G} strokeWidth="3" />
      </svg>
    ),
  },
  { w: 131, el: '56.0°C', ls: 0.1 },
  {
    w: 76,
    el: (
      <svg width="30" height="30" viewBox="0 0 30 30">
        <path d="M3 0L18 6.500L3 12.500ZM18 6.500L30 13.500Q29 18 24 21L3 12ZM3 13L20 22.500L3 30Z" fill="#fff" />
      </svg>
    ),
  },
  {
    w: 102,
    el: (
      <svg width="28" height="28" viewBox="0 0 28 28">
        <path d="M2 1V7L6 11L10 7V1M6 10V26" fill="none" stroke={G} strokeWidth="3.6" />
        <path d="M19 1H26V13H19ZM20 13H25L27 22Q26 27 22.500 28Q19 27 18.500 22Z" fill={G} />
      </svg>
    ),
  },
  {
    w: 66,
    el: (
      <svg width="28" height="28" viewBox="0 0 28 28">
        <circle cx="14" cy="14" r="12.600" fill="none" stroke={G} strokeWidth="2.6" />
        <path d="M10.500 7.500L20 14L10.500 20.500Z" fill={G} />
      </svg>
    ),
  },
  {
    w: 72,
    el: (
      <svg width="35" height="30" viewBox="0 0 35 30">
        <rect x="1.500" y="1.500" width="32" height="21" rx="3" fill="#3a3a3a" stroke={G} strokeWidth="2.6" />
        <path d="M14 22H21L22 27H25V29H10V27H13Z" fill={G} />
      </svg>
    ),
  },
  {
    w: 74,
    el: (
      <svg width="38" height="26" viewBox="0 0 38 26">
        <circle cx="4.500" cy="12" r="4.500" fill="#8c8c8c" />
        <circle cx="33.500" cy="12" r="4.500" fill="#8c8c8c" />
        <path d="M12 1Q17 2 17 8Q16 13 13 14V26H9V14Q5 11 6 6Q8 1 12 1ZM26 1Q21 2 21 8Q22 13 25 14V26H29V14Q33 11 32 6Q30 1 26 1Z" fill={G} />
      </svg>
    ),
  },
  { w: 56, el: '80%', fs: 22, ls: -0.4 },
  {
    w: 88,
    el: (
      <svg width="52" height="26" viewBox="0 0 52 26">
        <path d="M16 2H8Q2 2 2 8V18Q2 24 8 24H16M32 2H38Q45 2 45 8V18Q45 24 38 24H32M49 9Q52 13 49 17" fill="none" stroke="#8a8a8a" strokeWidth="2.4" />
        <path d="M5 8Q5 5 9 5H14V15Q15 19 18 21H9Q5 21 5 18ZM36 5H33V15Q32 19 29 21H32Q35 21 35 18V5Z" fill={G} />
        <path d="M20 0V7M27 0V7M18 7H29V13Q28 17 25 18V27H22V18Q19 17 18 13Z" fill={G} stroke={G} strokeWidth="1.600" />
      </svg>
    ),
  },
  {
    w: 68,
    el: (
      <svg width="26" height="26" viewBox="0 0 26 26">
        <circle cx="10.500" cy="10.500" r="9" fill="none" stroke={G} strokeWidth="2.8" />
        <path d="M17 17L25 25" stroke={G} strokeWidth="3.4" />
      </svg>
    ),
  },
  { w: 77, el: <InputBadge>A</InputBadge> },
  {
    w: 32,
    el: (
      <svg width="27" height="28" viewBox="0 0 27 28">
        <rect x="1.200" y="1.200" width="24.600" height="10.600" rx="5.300" fill="none" stroke={G} strokeWidth="2.400" />
        <circle cx="7" cy="6.500" r="3.500" fill={G} />
        <rect x="0" y="15" width="27" height="13" rx="6.500" fill={G} />
        <circle cx="20" cy="21.500" r="3.800" fill="#000" />
      </svg>
    ),
  },
  {
    w: 43,
    el: (
      <svg width="16" height="16" viewBox="0 0 16 16">
        <path d="M16 0L9 16L7.500 8.500L0 7Z" fill="#9a9a9a" />
      </svg>
    ),
  },
  { w: 312, el: '10월 19일 (목) 오후 5:12', ls: -0.05, fs: 27 },
];

const menus: [string, number][] = [
  ['File', 84],
  ['Edit', 87],
  ['Create', 123],
  ['View', 99],
  ['Window', 138],
  ['Scripts', 127],
  ['FMOD.io', 144],
  ['Help', 80],
];

const ValueMark = () => <path d="M3 10L13 16L3 22Z" fill="none" stroke="#1c1c1c" strokeWidth="2.4" />;

export default function App() {
  return (
    <Screen>
      <Global />
      <MenuBar>
        <MenuItem $w={68}>
          <FaApple size={33} />
        </MenuItem>
        <MenuItem $w={211} $bold $ls={0.5}>FMOD Studio</MenuItem>
        {menus.map(([t, w]) => (
          <MenuItem key={t} $w={w}>{t}</MenuItem>
        ))}
        <Grow />
        {tray.map((t, i) => (
          <TrayItem key={i} $w={t.w} $ls={t.ls} $fs={t.fs}>{t.el}</TrayItem>
        ))}
      </MenuBar>

      <Window>
        <TitleBar>
          <Lights>
            <Light $c="#ed6a5e" $dot />
            <Light $c="#f5bf4f" />
            <Light $c="#61c554" />
          </Lights>
          <WindowTitle>VikingVillage.fspro* - Event Editor</WindowTitle>
        </TitleBar>

        <Main>
          <Column $w={592}>
            <TabStrip>
              <Tab $kind="active">Events</Tab>
              <Tab $kind="idle">Banks</Tab>
              <Tab $kind="idle">Assets</Tab>
            </TabStrip>
            <BrowserPanel>
              <SearchBox>
                <svg width="40" height="30" viewBox="0 0 40 30">
                  <circle cx="12" cy="12" r="9.500" fill="none" stroke="#f0f0f0" strokeWidth="3.600" />
                  <path d="M18 19L27 28" stroke="#f0f0f0" strokeWidth="4.600" />
                  <path d="M28 12H38L33 18Z" fill="#f0f0f0" />
                </svg>
              </SearchBox>
              <Tree>
                <TreeRow>
                  <FolderIcon />
                  Vehicle
                </TreeRow>
                <TreeRow $selected>
                  <EventIcon />
                  Fire
                  <Tag>#unassigned</Tag>
                </TreeRow>
              </Tree>
              <DetailHeader>
                Fire
                <Tri dir="down" />
              </DetailHeader>
              <DetailBody>
                {['Tags', 'User Properties', 'Notes'].map((t) => (
                  <Field key={t}>
                    {t}
                    <CursorButton>
                      <CursorIcon />
                    </CursorButton>
                  </Field>
                ))}
              </DetailBody>
              <BrowserFooter>
                <OutlineButton $w={118}>New Event</OutlineButton>
                <OutlineButton $w={126}>New Folder</OutlineButton>
                <OutlineButton $w={85} $end>Flatten</OutlineButton>
              </BrowserFooter>
            </BrowserPanel>
          </Column>

          <Column>
            <Row $gap={8}>
              <Column $w={2450}>
                <TabStrip>
                  <Tab $kind="active">Fire</Tab>
                  <Tab $kind="add"><Plus /></Tab>
                </TabStrip>
                <Editor>
                  <Toolbar>
                    <Transport>
                      <TransportButton $on>
                        <svg width="28" height="28"><rect width="28" height="28" /></svg>
                      </TransportButton>
                      <TransportButton>
                        <svg width="28" height="32"><path d="M0 0L28 16L0 32Z" /></svg>
                      </TransportButton>
                      <TransportButton>
                        <svg width="24" height="30"><path d="M0 0H8V30H0ZM16 0H24V30H16Z" /></svg>
                      </TransportButton>
                    </Transport>
                    <Clock>
                      <ClockFace>
                        <ClockModes>
                          <Mode $w={64}>TIME</Mode>
                          <Mode $w={72} $on>BEATS</Mode>
                          <ClockState>STOPPED</ClockState>
                        </ClockModes>
                        <Digits>
                          {'0001.01.01'.split('').map((d, i) => (
                            <span key={i}>{d}</span>
                          ))}
                        </Digits>
                      </ClockFace>
                      <ClockSide>
                        <SideButton><RepeatIcon c="#191919" /></SideButton>
                        <SideButton>
                          <svg width="26" height="18" viewBox="0 0 26 18"><path d="M0 5H15V0L26 9L15 18V13H0Z" fill="#191919" /></svg>
                        </SideButton>
                      </ClockSide>
                    </Clock>
                    <ViewSwitch>
                      <ViewOption $on>
                        <svg width="36" height="28" viewBox="0 0 36 28">
                          <path d="M0 0H8V6H0ZM12 0H36V6H12ZM0 11H8V17H0ZM12 11H36V17H12ZM0 22H8V28H0ZM12 22H36V28H12Z" />
                        </svg>
                      </ViewOption>
                      <ViewOption>
                        <svg width="32" height="30" viewBox="0 0 32 30">
                          <path d="M0 0H8V7H0ZM12 0H20V7H12ZM24 0H32V7H24ZM0 11H8V30H0ZM12 11H20V30H12ZM24 11H32V30H24Z" />
                        </svg>
                      </ViewOption>
                    </ViewSwitch>
                  </Toolbar>
                  <ViewTabs>
                    <Tab $kind="timeline">Timeline</Tab>
                    <Tab $kind="addDark"><Plus c="#555" /></Tab>
                  </ViewTabs>
                  <Timeline>
                    <TrackRow $h={44}>
                      <RulerHead />
                      <Ruler>
                        {Array.from({ length: 15 }, (_, i) => (
                          <RulerMark key={i} $first={i === 0}>{1 + i * 4}</RulerMark>
                        ))}
                      </Ruler>
                    </TrackRow>
                    <TrackRow $h={48}>
                      <LogicHead>Logic Tracks</LogicHead>
                      <LogicLane>
                        <LoopRegion>
                          <svg width="20" height="36"><path d="M0 0L20 18L0 36Z" fill="#2683b5" /></svg>
                          <svg width="20" height="36"><path d="M20 0L0 18L20 36Z" fill="#2683b5" /></svg>
                        </LoopRegion>
                      </LogicLane>
                    </TrackRow>
                    <TrackRow $h={200} $mb={4}>
                      <TrackHead $c="linear-gradient(#6e6e6e, #686868)">
                        <TrackName>Audio 1</TrackName>
                        <TrackControls>
                          <GreyButton $w={72}>SOLO</GreyButton>
                          <GreyButton $w={72}>MUTE</GreyButton>
                          <TrackKnob>
                            <Knob id="k1" r={36} end={72} point={78} color="#dd0646" />
                          </TrackKnob>
                          <DbText>0.0 dB</DbText>
                        </TrackControls>
                        <MeterSlot>
                          <Meter $h={189} />
                        </MeterSlot>
                      </TrackHead>
                      <Lane $c="#5d5d5d" $g="#4c4c4c">
                        <Clip>
                          <ClipTitle>burning</ClipTitle>
                          <Wave w={1978} h={160} c1={41} c2={123} color="#1c1c1c" scale={1} />
                        </Clip>
                      </Lane>
                    </TrackRow>
                    <TrackRow $h={56} $mb={6}>
                      <TrackHead $c="#575757">
                        <TrackName>Master</TrackName>
                        <Row $gap={4}>
                          <GreyButton $w={40} $c="#757575">M</GreyButton>
                          <MiniSlider $w={72} $fill="linear-gradient(to right, #dd0646 0 50px, #c0c0c0 50px)">
                            <svg width="64" height="32">
                              <path d="M44 0H58L51 12ZM50 25H52V32H50Z" fill="#1c1c1c" />
                              <ValueMark />
                            </svg>
                            <SliderText $pl={12}>0dB</SliderText>
                          </MiniSlider>
                        </Row>
                        <MeterSlot $ml={9}>
                          <Meter $h={42} />
                        </MeterSlot>
                      </TrackHead>
                      <Lane $c="#262626" $g="#1a1a1a" />
                    </TrackRow>
                    <PlayLine $x={350} $top={0} $c="#e8e8e8" />
                    <PlayLine $x={386} $top={84} $c="#2f9fdc" />
                    <PlayLine $x={2316} $top={84} $c="#3f9fd4" />
                    <Playhead>
                      <svg width="20" height="26">
                        <path d="M1 1H17L1 24Z" fill="#fff" stroke="#000" strokeWidth="2.500" />
                      </svg>
                    </Playhead>
                  </Timeline>
                  <EditorVoid />
                </Editor>
                <Navigator>
                  <NavWindow>
                    <NavClip />
                  </NavWindow>
                  <PlayLine $x={34} $top={0} $c="#3f93cf" />
                  <PlayLine $x={1885} $top={0} $c="#52b0ea" />
                </Navigator>
              </Column>

              <Overview>
                <OverviewTitle>Overview</OverviewTitle>
                <SectionHeader><Tri dir="down" />3D Preview</SectionHeader>
                <Preview>
                  <PreviewControls>
                    <ViewLabel>View</ViewLabel>
                    <RadiusLabel>Radius</RadiusLabel>
                    <PreviewButton>Ortho</PreviewButton>
                    <PreviewButton>Front</PreviewButton>
                    <PreviewButton $kind="input">20</PreviewButton>
                    <PreviewButton $kind="lock">
                      <svg width="18" height="20" viewBox="0 0 18 20">
                        <path d="M4.500 10V6Q4.500 1.500 9 1.500T13.500 6V10" fill="none" stroke="#000" strokeWidth="3" />
                        <rect y="9" width="18" height="11" rx="1.500" />
                      </svg>
                    </PreviewButton>
                  </PreviewControls>
                  <SphereWrap>
                    <Sphere />
                  </SphereWrap>
                </Preview>
                <SectionHeader><Tri dir="down" />Parameters</SectionHeader>
                <Params>Lists parameters in scope</Params>
              </Overview>
            </Row>

            <Instrument>
              <InstrumentTitle>Single Instrument</InstrumentTitle>
              <Deck>
                <DeckMain>
                  <DeckHead>
                    <HeadCell $w={148}>Master</HeadCell>
                    <HeadCell $w={1000}>Sound</HeadCell>
                  </DeckHead>
                  <DeckBody>
                    <MasterCol>
                      <Caption>Volume</Caption>
                      <SliderSlot $mt={6}>
                        <Knob id="k2" r={50} end={74} point={79} color="#dd0646" />
                      </SliderSlot>
                      <Caption $mt={-2}>0.00 dB</Caption>
                      <Caption $mt={24}>Pitch</Caption>
                      <SliderSlot $mt={12}>
                        <MiniSlider $w={118} $fill="#b3b3b3">
                          <svg width="110" height="32">
                            <path d="M49 0H61L55 8ZM54 27H56V32H54Z" fill="#1c1c1c" />
                            <ValueMark />
                          </svg>
                          <SliderText $pl={9}>0.00 st</SliderText>
                        </MiniSlider>
                      </SliderSlot>
                      <Caption $mt={5}>Start Offset</Caption>
                      <SliderSlot $mt={12}>
                        <MiniSlider $w={118} $fill="linear-gradient(to right, #6ea924 0 46px, #b5b5b5 46px)">
                          <svg width="110" height="32">
                            <path d="M12 0H80V6H12Z" fill="#00d9ae" />
                            <path d="M10 0H12V7H10ZM80 0H82V7H80Z" fill="#1c1c1c" />
                            <path d="M40 0H52L46 8Z" fill="#1c1c1c" />
                            <ValueMark />
                          </svg>
                          <SliderText $pl={9}>41%</SliderText>
                        </MiniSlider>
                      </SliderSlot>
                    </MasterCol>
                    <SoundCol>
                      <SoundTools>
                        <GreyButton $w={76}>Async</GreyButton>
                        <Grow />
                        <GreyButton $w={70}><RepeatIcon c="#080808" /></GreyButton>
                        <MiniSlider $w={70} $fill="#707070">
                          <svg width="62" height="32">
                            <path d="M0 0H9L4 8Z" fill="#1c1c1c" />
                            <ValueMark />
                          </svg>
                          <SliderText $pl={9}>1</SliderText>
                        </MiniSlider>
                      </SoundTools>
                      <SoundPanel>
                        <FileName>burning.mp3</FileName>
                        <WaveBox>
                          <Wave w={994} h={174} c1={40} c2={132} color="#8a8a8a" scale={1.15} />
                          <Original>Original: 2.2 MB, 24.0 kHz, 2 Ch</Original>
                        </WaveBox>
                        <SoundFooter>
                          <Row $gap={6}>
                            <OutlineButton $w={34}>M</OutlineButton>
                            <OutlineButton $w={62}>Loop</OutlineButton>
                            <OutlineButton $w={111}>Compress</OutlineButton>
                          </Row>
                          <span>00:00.000 / 01:49.032</span>
                        </SoundFooter>
                      </SoundPanel>
                    </SoundCol>
                  </DeckBody>
                </DeckMain>
                <Strip $w={40}>
                  <Tri dir="right" />
                  <VerticalText $mt={107} $shift={4}>Trigger Behavior</VerticalText>
                </Strip>
                <Strip $w={40}>
                  <Tri dir="left" />
                  <VerticalText $mt={61} $shift={1}>Automation &amp; Modulation</VerticalText>
                </Strip>
                <RandomCol>
                  <RandomHead $w={174}>Random</RandomHead>
                  <RandomBody>
                    <Caption>Start Offset</Caption>
                    <SliderSlot $mt={7}>
                      <Knob id="k3" r={44} end={32} point={30} color="#fbd84a" />
                    </SliderSlot>
                    <Caption $mt={-1}>62%</Caption>
                  </RandomBody>
                </RandomCol>
                <ContextMenu $x={129} $y={181} $w={371}>
                  <ContextItem $left={48}>Add Automation</ContextItem>
                  <ContextItem $left={48} $on>
                    <span>Add Modulation</span>
                    <svg width="8" height="16"><path d="M0 0L8 8L0 16Z" fill="#bdbdbd" /></svg>
                  </ContextItem>
                  <ContextItem $left={48}>Remove All Modulation</ContextItem>
                  <MenuRule />
                  <ContextItem $left={48}>Copy Property</ContextItem>
                </ContextMenu>
                <ContextMenu $x={496} $y={225} $w={213}>
                  <ContextItem $left={13} $on>
                    <CheckSlot>
                      <svg width="22" height="18" viewBox="0 0 22 18">
                        <path d="M2 9L8 16L20 2" fill="none" stroke="#fff" strokeWidth="4.500" />
                      </svg>
                    </CheckSlot>
                    Random
                  </ContextItem>
                  {['AHDSR', 'LFO', 'Sidechain'].map((t) => (
                    <ContextItem key={t} $left={47}>{t}</ContextItem>
                  ))}
                </ContextMenu>
              </Deck>
            </Instrument>
          </Column>
        </Main>

        <StatusBar>
          <StatusBox $w={180} $light>Live Update Off</StatusBox>
          <StatusBox $w={314}>
            <StatusKey $w={104}>Platform</StatusKey>
            <StatusValue>Desktop</StatusValue>
            <Tri dir="down" />
          </StatusBox>
          <StatusBox $w={288}>
            <StatusKey $w={80}>Locale</StatusKey>
            <StatusValue />
            <Tri dir="down" />
          </StatusBox>
          <StatusBox $w={240} />
        </StatusBar>
      </Window>

      <Dock>
        {dockApps.map((a, i) => (
          <DockCell key={i}>
            {a.el}
            {a.badge && <Badge>{a.badge}</Badge>}
            {a.run && <RunDot />}
          </DockCell>
        ))}
        <DockSplit><i /></DockSplit>
        <DockCell><Downloads /></DockCell>
        <DockCell><Trash /></DockCell>
      </Dock>
    </Screen>
  );
}
